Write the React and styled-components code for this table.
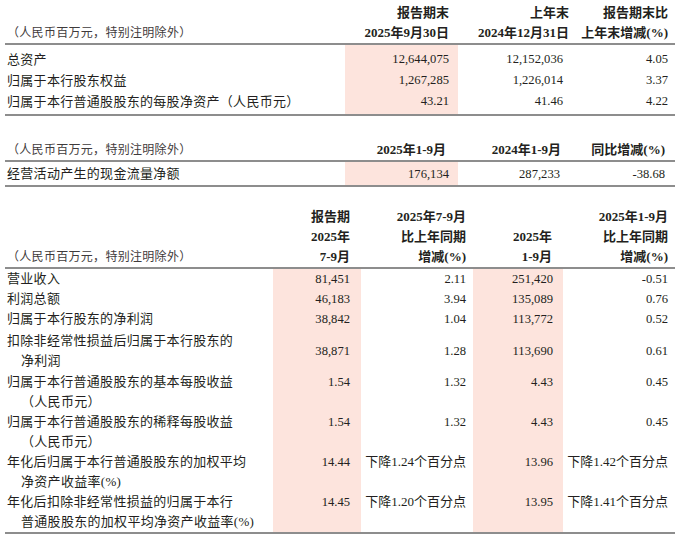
import styled, { createGlobalStyle } from 'styled-components';

const GlobalStyle = createGlobalStyle`
  body {
    margin: 0;
    background: #fff;
  }
`;

const PINK = '#fde4dd';
const RULE = '2px solid #8d8d8d';

const Page = styled.div`
  width: 670px;
  margin-left: 5px;
  padding-top: 3px;
  color: #231f20;
  font-family: 'Liberation Serif', 'Noto Sans CJK SC', serif;
  font-size: 13px;
`;

const Table = styled.section`
  margin-top: ${({ $mt = 0 }) => $mt}px;
`;

const Row = styled.div`
  display: grid;
  grid-template-columns: ${({ $cols }) => $cols};
  line-height: ${({ $lh = 20 }) => $lh}px;
  align-items: ${({ $head }) => ($head ? 'end' : 'stretch')};
  border-bottom: ${({ $rule }) => ($rule ? RULE : 'none')};
  & > * {
    padding-top: ${({ $pt = 0 }) => $pt}px;
    padding-bottom: ${({ $pb = 0 }) => $pb}px;
  }
`;

const Note = styled.div`
  padding-left: 2px;
  font-size: 12px;
  color: #3f3b3c;
  letter-spacing: 0.3px;
  white-space: nowrap;
`;

const HeadCell = styled.div`
  text-align: right;
  font-weight: 700;
  white-space: nowrap;
  padding-right: ${({ $pr = 0 }) => $pr}px;
`;

const Label = styled.div`
  padding-left: 2px;
  letter-spacing: 0.3px;
  white-space: nowrap;
`;

const LabelLine = styled.div`
  padding-left: ${({ $indent }) => ($indent ? '14px' : '0')};
`;

const Value = styled.div`
  display: flex;
  justify-content: flex-end;
  align-items: ${({ $center }) => ($center ? 'center' : 'flex-start')};
  padding-right: ${({ $pr = 0 }) => $pr}px;
  background: ${({ $hl }) => ($hl ? PINK : 'transparent')};
  font-size: ${({ $text }) => ($text ? '13px' : '12.6px')};
  white-space: nowrap;
`;

const T1_COLS = '340px 113px 111px 106px';
const T3_COLS = '268px 88px 112px 90px 112px';
const NOTE = '（人民币百万元，特别注明除外）';

const balanceRows = [
  { label: '总资产', vals: ['12,644,075', '12,152,036', '4.05'] },
  { label: '归属于本行股东权益', vals: ['1,267,285', '1,226,014', '3.37'] },
  { label: '归属于本行普通股股东的每股净资产（人民币元）', vals: ['43.21', '41.46', '4.22'] },
];

const incomeRows = [
  { label: ['营业收入'], vals: ['81,451', '2.11', '251,420', '-0.51'] },
  { label: ['利润总额'], vals: ['46,183', '3.94', '135,089', '0.76'] },
  { label: ['归属于本行股东的净利润'], vals: ['38,842', '1.04', '113,772', '0.52'] },
  {
    label: ['扣除非经常性损益后归属于本行股东的', '净利润'],
    vals: ['38,871', '1.28', '113,690', '0.61'],
    center: true,
    pt: 2,
  },
  {
    label: ['归属于本行普通股股东的基本每股收益', '（人民币元）'],
    vals: ['1.54', '1.32', '4.43', '0.45'],
    pt: 1,
  },
  {
    label: ['归属于本行普通股股东的稀释每股收益', '（人民币元）'],
    vals: ['1.54', '1.32', '4.43', '0.45'],
  },
  {
    label: ['年化后归属于本行普通股股东的加权平均', '净资产收益率(%)'],
    vals: ['14.44', '下降1.24个百分点', '13.96', '下降1.42个百分点'],
  },
  {
    label: ['年化后扣除非经常性损益的归属于本行', '普通股股东的加权平均净资产收益率(%)'],
    vals: ['14.45', '下降1.20个百分点', '13.95', '下降1.41个百分点'],
  },
];

const t3Pad = [11, 7, 10, 7];

const App = () => {
  return (
    <>
      <GlobalStyle />
      <Page>
        <Table>
          <Row $cols={T1_COLS} $head $rule>
            <Note>{NOTE}</Note>
            <HeadCell $pr={9}>
              <div>报告期末</div>
              <div>2025年9月30日</div>
            </HeadCell>
            <HeadCell $pr={0}>
              <div>上年末</div>
              <div>2024年12月31日</div>
            </HeadCell>
            <HeadCell $pr={7}>
              <div>报告期末比</div>
              <div>上年末增减(%)</div>
            </HeadCell>
          </Row>
          {balanceRows.map((r, i) => (
            <Row
              key={r.label}
              $cols={T1_COLS}
              $lh={21}
              $pt={i === 0 ? 4 : 0}
              $pb={i === balanceRows.length - 1 ? 2 : 0}
              $rule={i === balanceRows.length - 1}
            >
              <Label>{r.label}</Label>
              <Value $hl $pr={9}>{r.vals[0]}</Value>
              <Value $pr={6}>{r.vals[1]}</Value>
              <Value $pr={7}>{r.vals[2]}</Value>
            </Row>
          ))}
        </Table>

        <Table $mt={24}>
          <Row $cols={T1_COLS} $head $rule>
            <Note>{NOTE}</Note>
            <HeadCell $pr={12}>2025年1-9月</HeadCell>
            <HeadCell $pr={8}>2024年1-9月</HeadCell>
            <HeadCell $pr={10}>同比增减(%)</HeadCell>
          </Row>
          <Row $cols={T1_COLS} $pt={2} $pb={1} $rule>
            <Label>经营活动产生的现金流量净额</Label>
            <Value $hl $pr={9}>176,134</Value>
            <Value $pr={9}>287,233</Value>
            <Value $pr={10}>-38.68</Value>
          </Row>
        </Table>

        <Table $mt={20}>
          <Row $cols={T3_COLS} $head $rule>
            <Note>{NOTE}</Note>
            <HeadCell $pr={11}>
              <div>报告期</div>
              <div>2025年</div>
              <div>7-9月</div>
            </HeadCell>
            <HeadCell $pr={7}>
              <div>2025年7-9月</div>
              <div>比上年同期</div>
              <div>增减(%)</div>
            </HeadCell>
            <HeadCell $pr={11}>
              <div>2025年</div>
              <div>1-9月</div>
            </HeadCell>
            <HeadCell $pr={7}>
              <div>2025年1-9月</div>
              <div>比上年同期</div>
              <div>增减(%)</div>
            </HeadCell>
          </Row>
          {incomeRows.map((r, i) => (
            <Row
              key={r.label.join('')}
              $cols={T3_COLS}
              $pt={r.pt || 0}
              $rule={i === incomeRows.length - 1}
            >
              <Label>
                {r.label.map((line, j) => (
                  <LabelLine key={line} $indent={j > 0}>
                    {line}
                  </LabelLine>
                ))}
              </Label>
              {r.vals.map((v, j) => (
                <Value
                  key={j}
                  $hl={j === 0 || j === 2}
                  $pr={t3Pad[j]}
                  $center={r.center}
                  $text={/[^\d.,-]/.test(v)}
                >
                  {v}
                </Value>
              ))}
            </Row>
          ))}
        </Table>
      </Page>
    </>
  );
};

export default App;
